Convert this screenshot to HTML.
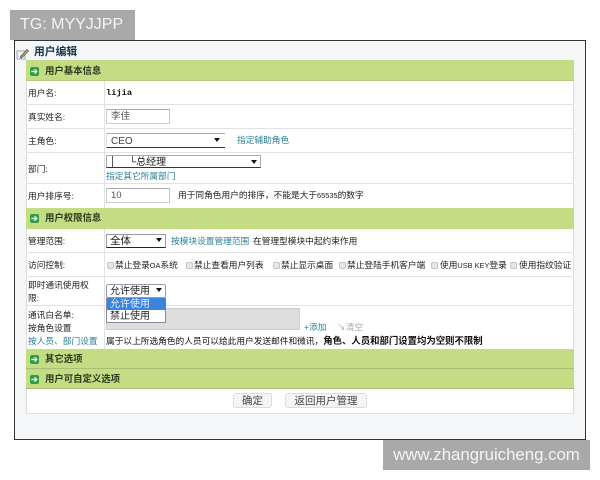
<!DOCTYPE html>
<html lang="zh"><head><meta charset="utf-8">
<style>
html,body{margin:0;padding:0;width:600px;height:480px;overflow:hidden;background:#fff}
body{position:relative;font-family:"Liberation Sans","WenQuanYi Zen Hei","Noto Sans CJK SC",sans-serif;font-size:9px;color:#222}
div{position:absolute;box-sizing:border-box}
#w{left:0;top:0;width:600px;height:480px;filter:blur(0.35px)}
.t{white-space:nowrap;line-height:12px;font-size:8.7px;color:#222}
.t small{font-size:7.4px}
.t b{font-size:9.4px;color:#111}
.t .l,.l{color:#2a7f96}
.h{left:26px;width:548px;background:#c3dd84}
.hl{left:26px;width:548px;height:1px;background:#e2e2e2}
.ic{left:30px;width:9px;height:9px;background:#2f9e44;border-radius:2px;color:#fff;font-size:8px;line-height:9px;text-align:center;font-weight:bold}
.ht{left:45px;font-weight:bold;font-size:9.4px;color:#2b3a1c;white-space:nowrap;line-height:12px}
.inp{background:#fff;border:1px solid #ccc;border-top-color:#aaa;font-size:9.5px;color:#555;padding-left:4px}
.sel{background:#fff;border:1px solid #aaa;border-bottom-color:#334;color:#222}
.arr{width:0;height:0;border-left:3px solid transparent;border-right:3px solid transparent;border-top:4px solid #111}
.cb{width:7px;height:7px;background:#e6e6e6;border:1px solid #c4c4c4;border-radius:2px;top:262px}
.btn{background:#f5f5f5;border:1px solid #ddd;border-radius:3px;text-align:center;font-size:10.5px;line-height:14px;color:#444}
</style></head><body>
<div id="w">
<div style="left:10px;top:10px;width:125px;height:30px;background:#a9a9a9;color:#f4f4f4;font-size:16px;line-height:30px;padding-left:10px;white-space:nowrap">TG: MYYJJPP</div>
<div style="left:14px;top:40px;width:572px;height:400px;background:#f5f6f7;border:1px solid #333"></div>
<div style="left:26px;top:60px;width:548px;height:354px;background:#fff;border:1px solid #ddd"></div>
<svg style="position:absolute;left:16px;top:48px" width="14" height="12" viewBox="0 0 14 12"><rect x="1" y="3" width="8" height="8" fill="#eef1f6" stroke="#9aa7b8"/><path d="M4 9 L11 1.5 L12.5 3 L5.5 10 Z" fill="#c9a45a" stroke="#555" stroke-width=".7"/></svg>
<div class="t" style="left:34px;top:46px;font-weight:bold;font-size:10.8px;color:#17384f">用户编辑</div>

<div class="h" style="top:60px;height:21px;border-bottom:1px solid #b6c97c"></div>
<div class="ic" style="top:67px">➔</div><div class="ht" style="top:65px">用户基本信息</div>
<div class="hl" style="top:104px"></div><div class="hl" style="top:128px"></div><div class="hl" style="top:152px"></div><div class="hl" style="top:183px"></div>
<div class="hl" style="top:252px"></div><div class="hl" style="top:276px"></div><div class="hl" style="top:305px"></div>
<div style="left:104px;top:81px;width:1px;height:127px;background:#e2e2e2"></div>
<div style="left:104px;top:229px;width:1px;height:120px;background:#e2e2e2"></div>

<div class="t" style="left:28px;top:87px">用户名:</div>
<div class="t" style="left:106px;top:87px;font-family:'Liberation Mono',monospace;font-weight:bold;font-size:8.7px;color:#111">lijia</div>
<div class="t" style="left:28px;top:111px">真实姓名:</div>
<div class="inp" style="left:106px;top:109px;width:64px;height:15px;line-height:14px">李佳</div>
<div class="t" style="left:28px;top:135px">主角色:</div>
<div class="sel" style="left:106px;top:133px;width:119px;height:15px;font-size:10px;line-height:15px;padding-left:4px;border-left-color:#ddd;border-right:0;border-top-color:#aaa;color:#444">CEO</div>
<div class="arr" style="left:214px;top:138px"></div>
<div class="t l" style="left:237px;top:134px">指定辅助角色</div>

<div class="t" style="left:28px;top:163px">部门:</div>
<div class="sel" style="left:106px;top:155px;width:155px;height:13px;font-size:10px;line-height:14px;padding-left:22px">└总经理</div>
<div style="left:112px;top:156px;width:1px;height:11px;background:#555"></div>
<div class="arr" style="left:251px;top:160px"></div>
<div class="t l" style="left:106px;top:170px">指定其它所属部门</div>

<div class="t" style="left:28px;top:190px">用户排序号:</div>
<div class="inp" style="left:106px;top:188px;width:64px;height:15px;line-height:14px">10</div>
<div class="t" style="left:178px;top:189px">用于同角色用户的排序，不能是大于<small>65535</small>的数字</div>

<div class="h" style="top:208px;height:21px"></div>
<div class="ic" style="top:214px">➔</div><div class="ht" style="top:212px">用户权限信息</div>

<div class="t" style="left:28px;top:235px">管理范围:</div>
<div class="sel" style="left:106px;top:234px;width:60px;height:14px;font-size:10.5px;line-height:13px;padding-left:3px;border-color:#99a #99a #223 #99a">全体</div>
<div class="arr" style="left:156px;top:238px"></div>
<div class="t l" style="left:171px;top:235px">按模块设置管理范围</div>
<div class="t" style="left:253px;top:235px">在管理型模块中起约束作用</div>

<div class="t" style="left:28px;top:259px">访问控制:</div>
<div class="cb" style="left:107px"></div><div class="t" style="left:115px;top:259px">禁止登录<small>OA</small>系统</div>
<div class="cb" style="left:186px"></div><div class="t" style="left:194px;top:259px">禁止查看用户列表</div>
<div class="cb" style="left:273px"></div><div class="t" style="left:281px;top:259px">禁止显示桌面</div>
<div class="cb" style="left:339px"></div><div class="t" style="left:347px;top:259px">禁止登陆手机客户端</div>
<div class="cb" style="left:431px"></div><div class="t" style="left:440px;top:259px">使用<small>USB KEY</small>登录</div>
<div class="cb" style="left:510px"></div><div class="t" style="left:519px;top:259px">使用指纹验证</div>

<div class="t" style="left:28px;top:279px">即时通讯使用权</div>
<div class="t" style="left:28px;top:292px">限:</div>

<div style="left:106px;top:308px;width:194px;height:22px;background:#dedede;border:1px solid #ccc"></div>
<div class="sel" style="left:106px;top:284px;width:60px;height:14px;font-size:10px;line-height:14px;padding-left:3px;border-color:#99a;border-radius:2px">允许使用</div>
<div class="arr" style="left:156px;top:288px"></div>
<div style="left:106px;top:298px;width:60px;height:25px;background:#fff;border:1px solid #889;border-top:0;font-size:10px;line-height:13px;color:#222">
<div style="left:0;top:0;width:59px;height:12px;background:#3b84de;color:#e8f0ff;padding-left:3px">允许使用</div>
<div style="left:3px;top:12px;white-space:nowrap">禁止使用</div></div>

<div class="t" style="left:28px;top:309px">通讯白名单:</div>
<div class="t" style="left:28px;top:322px">按角色设置</div>
<div class="t l" style="left:28px;top:335px">按人员、部门设置</div>
<div class="t" style="left:304px;top:321px;color:#2a7f96">+添加</div>
<div class="t" style="left:337px;top:321px;color:#aaa">↘清空</div>
<div class="t" style="left:106px;top:335px;color:#111">属于以上所选角色的人员可以给此用户发送邮件和微讯，<b>角色、人员和部门设置均为空则不限制</b></div>

<div class="h" style="top:349px;height:20px;border-bottom:1px solid #a9bf75"></div>
<div class="ic" style="top:355px">➔</div><div class="ht" style="top:353px">其它选项</div>
<div class="h" style="top:369px;height:20px;border-bottom:1px solid #a9bf75"></div>
<div class="ic" style="top:375px">➔</div><div class="ht" style="top:373px">用户可自定义选项</div>

<div class="btn" style="left:233px;top:393px;width:39px;height:15px">确定</div>
<div class="btn" style="left:285px;top:393px;width:82px;height:15px">返回用户管理</div>

<div style="left:383px;top:440px;width:207px;height:30px;background:#a9a9a9;color:#f4f4f4;font-size:16.8px;line-height:30px;text-align:center;white-space:nowrap">www.zhangruicheng.com</div>
</div>
</body></html>
